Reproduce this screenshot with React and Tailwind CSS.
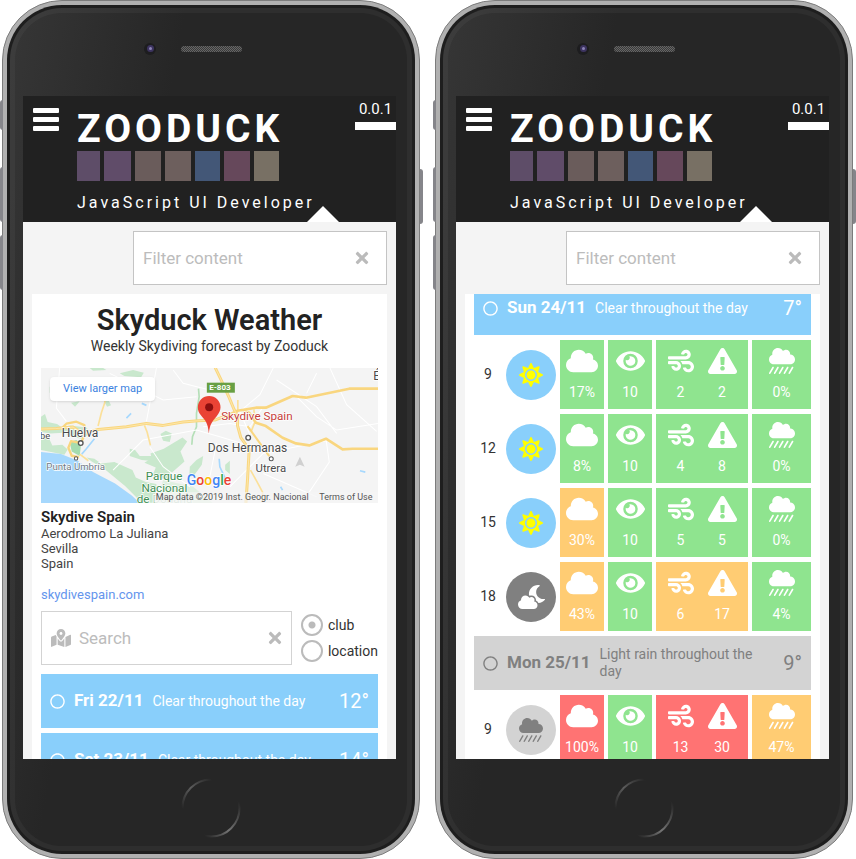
import React from "react";
import {
  FaCloud,
  FaEye,
  FaWind,
  FaExclamationTriangle,
  FaCloudShowersHeavy,
  FaCloudMoon,
  FaSun,
  FaTimes,
  FaMapMarkedAlt,
  FaRegCircle,
} from "react-icons/fa";

const SWATCHES = [
  "w-[23px] bg-[#5e4d68]",
  "w-[27px] bg-[#604c69]",
  "w-[26px] bg-[#6a5c5b]",
  "w-[26px] bg-[#6d5f5d]",
  "w-[25px] bg-[#435777]",
  "w-[26px] bg-[#66485b]",
  "w-[25px] bg-[#787064]",
];

const LEVELS = {
  good: "bg-[#8fe48f]",
  fair: "bg-[#ffcc73]",
  bad: "bg-[#ff7373]",
};

const SUNDAY = [
  { hour: 9, sky: "sun", cloud: [17, "good"], vis: [10, "good"], wind: [2, 2, "good"], rain: [0, "good"] },
  { hour: 12, sky: "sun", cloud: [8, "good"], vis: [10, "good"], wind: [4, 8, "good"], rain: [0, "good"] },
  { hour: 15, sky: "sun", cloud: [30, "fair"], vis: [10, "good"], wind: [5, 5, "good"], rain: [0, "good"] },
  { hour: 18, sky: "night", cloud: [43, "fair"], vis: [10, "good"], wind: [6, 17, "fair"], rain: [4, "good"] },
];

const MONDAY = [
  { hour: 9, sky: "rain", cloud: [100, "bad"], vis: [10, "good"], wind: [13, 30, "bad"], rain: [47, "fair"] },
];

function Phone({ children }) {
  return (
    <div className="relative min-w-0 flex-1">
      <span className="absolute top-[100px] -left-[2px] h-[30px] w-[3px] rounded-l-sm bg-[#85858a]" />
      <span className="absolute top-[167px] -left-[2px] h-[55px] w-[3px] rounded-l-sm bg-[#85858a]" />
      <span className="absolute top-[235px] -left-[2px] h-[55px] w-[3px] rounded-l-sm bg-[#85858a]" />
      <span className="absolute top-[169px] -right-[3px] h-[55px] w-[3px] rounded-r-sm bg-[#85858a]" />
      <div className="rounded-[60px] border border-[#7c7c7c] bg-[#b0b0b0] p-1">
        <div className="rounded-[55px] bg-[#1e1e1e] p-[3px]">
          <div className="rounded-[52px] border-[5px] border-white/4 bg-[#262626] bg-linear-[100deg,#363636_0%,#262626_32%] bg-origin-border pr-[11px] pl-2">
            <div className="flex h-[83px] items-center justify-center gap-[25px] pb-[12px] pl-[4px]">
              <span className="grid size-3 place-items-center rounded-full bg-[#1d1d1f]">
                <span className="grid size-[7px] place-items-center rounded-full bg-[#3d3460]">
                  <span className="size-[3px] rounded-full bg-[#8d84b8]" />
                </span>
              </span>
              <span className="h-[6px] w-[61px] rounded-full bg-[#5c5c5c] bg-[conic-gradient(#3a3a3a_25%,#666_0_50%,#3a3a3a_0_75%,#666_0)] bg-size-[2px_2px]" />
              <span className="w-3" />
            </div>
            <div className="flex h-[663px] flex-col overflow-hidden bg-[#f4f4f4]">{children}</div>
            <div className="flex h-[87px] items-start justify-center pt-[19px] pl-[3px]">
              <button aria-label="Home" className="rounded-full">
                <svg viewBox="0 0 60 60" className="size-[60px]" fill="none" strokeWidth="2">
                  <defs>
                    <linearGradient id="ring-light" x1="0" y1="1" x2="1" y2="0">
                      <stop offset="0.2" stopColor="#262626" />
                      <stop offset="0.5" stopColor="#5c5c5c" />
                      <stop offset="0.8" stopColor="#262626" />
                    </linearGradient>
                    <linearGradient id="ring-bright" x1="0" y1="1" x2="1" y2="0">
                      <stop offset="0.15" stopColor="#262626" />
                      <stop offset="0.45" stopColor="#747474" />
                      <stop offset="0.85" stopColor="#262626" />
                    </linearGradient>
                  </defs>
                  <path d="M9.800 50.200A28.500 28.500 0 0 1 50.200 9.800" stroke="url(#ring-light)" />
                  <path d="M50.200 9.800A28.500 28.500 0 0 1 9.800 50.200" stroke="url(#ring-bright)" />
                </svg>
              </button>
            </div>
          </div>
        </div>
      </div>
    </div>
  );
}

function Header() {
  return (
    <header className="flex h-[126px] shrink-0 bg-[#212121] text-white">
      <button aria-label="Menu" className="ml-[10px] flex w-[26px] flex-col gap-1 self-start pt-3">
        <span className="h-[5px] w-full rounded-[1px] bg-white" />
        <span className="h-[5px] w-full rounded-[1px] bg-white" />
        <span className="h-[5px] w-full rounded-[1px] bg-white" />
      </button>
      <div className="ml-[18px] flex-1 pt-[13px]">
        <h1 className="text-[39px] leading-[40px] font-bold tracking-[4px]">ZOODUCK</h1>
        <div className="mt-[2px] flex h-[30px] gap-1">
          {SWATCHES.map((s) => (
            <span key={s} className={s} />
          ))}
        </div>
        <div className="flex items-end">
          <p className="mt-3 h-[29px] text-[16px] leading-[20px] tracking-[3px] whitespace-nowrap">
            JavaScript UI Developer
          </p>
          <svg viewBox="0 0 32 16" className="-ml-2 h-4 w-8 shrink-0" fill="#fff">
            <path d="M0 16 16 0 32 16z" />
          </svg>
        </div>
      </div>
      <div className="-ml-[41px] w-[41px] pt-1 text-center text-[15px] leading-[18px]">
        0.0.1
        <div className="mt-1 h-2 bg-white" />
      </div>
    </header>
  );
}

function FilterField() {
  return (
    <div className="flex h-[72px] shrink-0 justify-end px-[9px] pt-[9px]">
      <div className="flex h-[54px] w-[254px] items-center border border-[#c4c4c4] bg-white pr-[17px] pl-[9px]">
        <input
          type="text"
          aria-label="Filter content"
          placeholder="Filter content"
          className="min-w-0 flex-1 pt-0.5 text-[17px] outline-none placeholder:text-[#bcbcbc]"
        />
        <button aria-label="Clear filter" className="text-[#bbb]">
          <FaTimes className="h-[18px] w-[14px]" />
        </button>
      </div>
    </div>
  );
}

function AreaMap() {
  return (
    <div className="relative mt-3">
      <svg viewBox="34 24 1010 405" className="block w-full" fill="none" role="img" aria-label="Map">
        <rect x="34" y="24" width="1010" height="405" fill="#f4f4f4" />
        <g fill="#c9e8cd">
          <path d="M34 170l12-8 8 24 28 6 20 14 0 12-40 2-28-4zM34 222l20 4 14 30 30-2 16 14-10 16-40-8-30-6z" />
          <path d="M92 202l30-6 48 6 14 18-30 16-40-10z" />
          <path d="M170 292l24 4 20 14 40-4 54 24 10 22 30 14 32 6-4 56h-40l-50-50-60-50-40-24z" />
          <path d="M300 266l16 4 14 18 40 0 10 16-44-4-36-12z" />
          <path d="M392 222l16-10 18 8-6 26-20-4z" />
          <path d="M362 280l40-14 56-34 14 12-20 30 12 30-34 30-22 24-40-12 10-24-34-14 22-14z" />
          <path d="M480 320l20-20 20-12-4 26-22 30-16 8z" />
          <path d="M586 314l14-12 0 40-14-12zM270 40l40-10 32 8-8 14-50-4zM124 128l26-4-14 16zM222 122l14-2 8 16-12 4z" />
          <path d="M60 80l20 14-6 10-14-6zM180 24l40 0 10 6-40 2z" />
        </g>
        <path d="M400 360l90 20 60 50H380z" fill="#e0f0e1" />
        <path d="M506 86l2 24-8 50 0 40-12 30-2 24" stroke="#b5dfb8" strokeWidth="5" />
        <path d="M34 276l60 6 50 20 46 34 66 34 50 36 24 23H34z" fill="#a6d8fd" />
        <path d="M194 236l-24 30-14 16M336 130l14 6M290 174l14-14M568 296l2 24 14 30-4 20M990 332l16 4M752 380l6 10" stroke="#a6d8fd" strokeWidth="5" />
        <path d="M120 246l20-6 14 12-4 36-24-14z" fill="#a5dcae" />
        <g stroke="#fff" strokeWidth="3">
          <path d="M90 24l-10 120 30 40M380 24l-30 160M430 30l30 40 80 20M730 24l-40 80-60 50 30 70M740 60l120 80 60 80M800 110l60 60 60 40 124-20M860 40l-30 60M250 330l90-90 160-30 70 20 100 30M360 260l40 60 80 60M560 250l-20 100M600 380l100-100 200-40M700 340l160 70M888 236l10 70-60 90M240 40l160 80 100-10M520 200l80-10 60 10 40-60M900 24l50 110 90 80" />
        </g>
        <path
          d="M205 198l10-40 10-30 4-24-12-12M222 104l24-10 40-40M344 196l8 20 10 40M624 120v30l-12 22M672 148l4 36-12 30M662 330l20 36 16 30v30M150 282l26 20"
          stroke="#fbe09a"
          strokeWidth="5"
          strokeLinejoin="round"
        />
        <g stroke="#f9d67f" strokeWidth="9" strokeLinejoin="round">
          <path d="M34 207l46-2 50-4 30 20 45-13 85-8 60-10 50 6 60-10 45-4 50-2 52-20" />
          <path d="M606 160l17-8 55-9h30l80-35 40 5 130-27h86" strokeWidth="8" />
          <path d="M556 23l17 35 25 55 14 34 11 20 0 30 10 36 25 35-5 90-5 70" />
          <path d="M640 152l18 6 20 30 30 10 50 35 40 17 40 6 50-20 50 32 30-2h76" strokeWidth="8" />
          <path d="M653 198l65 90" strokeWidth="6" />
          <path d="M96 205l14-14 30-6 24 10 0 30-10 24-30-6-8 20 10 24 22 4" strokeWidth="7" />
        </g>
        <g stroke="#fde6a8" strokeWidth="3" strokeLinejoin="round">
          <path d="M34 207l46-2 50-4 30 20 45-13 85-8 60-10 50 6 60-10 45-4 50-2 52-20" />
          <path d="M556 23l17 35 25 55 14 34 11 20 0 30 10 36 25 35-5 90-5 70" />
        </g>
        <rect x="531" y="68" width="84" height="30" fill="#689f43" />
        <path d="M810 290l14 30-14-6-14 6z" fill="#d0d0d0" />
        <g stroke="#555" strokeWidth="4" fill="#fff">
          <circle cx="153" cy="249" r="7" />
          <circle cx="655" cy="233" r="7" />
          <circle cx="139" cy="295" r="5" strokeWidth="3" />
          <circle cx="724" cy="296" r="6" strokeWidth="3" />
        </g>
        <path
          d="M537 220c-3-32-10-38-22-52-8-9-11-16-11-26a34 34 0 0 1 68 0c0 10-4 17-12 27-12 14-20 22-23 51z"
          fill="#ea4335"
        />
        <circle cx="538" cy="142" r="12" fill="#8c0f0f" />
        <g fill="#4a4a4a" stroke="#fff" strokeWidth="4" paintOrder="stroke">
          <text x="96" y="231" fontSize="36">Huelva</text>
          <text x="31" y="238" fontSize="28">be</text>
          <text x="50" y="329" fontSize="29" fill="#6e7a86">Punta Umbría</text>
          <text x="534" y="275" fontSize="36">Dos Hermanas</text>
          <text x="677" y="336" fontSize="34">Utrera</text>
          <text x="1030" y="61" fontSize="36">É</text>
          <text x="574" y="180" fontSize="35" fill="#c5403a">Skydive Spain</text>
          <g fill="#3e8e53" fontSize="35">
            <text x="348" y="361">Parque</text>
            <text x="335" y="395">Nacional</text>
            <text x="321" y="430">de <tspan fillOpacity=".4">Doñana</tspan></text>
          </g>
        </g>
        <text x="538" y="91" fontSize="24" fontWeight="700" fill="#fff">E-803</text>
        <text x="471" y="374" fontSize="42" fontWeight="500" stroke="#fff" strokeWidth="4" paintOrder="stroke">
          <tspan fill="#4285f4">G</tspan>
          <tspan fill="#ea4335">o</tspan>
          <tspan fill="#fbbc05">o</tspan>
          <tspan fill="#4285f4">g</tspan>
          <tspan fill="#34a853">l</tspan>
          <tspan fill="#ea4335">e</tspan>
        </text>
        <rect x="376" y="396" width="668" height="33" fill="#f5f5f5" fillOpacity=".7" />
        <g fill="#555" fontSize="27">
          <text x="378" y="419">Map data ©2019 Inst. Geogr. Nacional</text>
          <text x="868" y="419">Terms of Use</text>
        </g>
      </svg>
      <a
        href="#map"
        className="absolute top-[9px] left-[9px] rounded-sm bg-white px-[13px] text-[11px] leading-[24px] text-[#3b82e0] shadow"
      >
        View larger map
      </a>
    </div>
  );
}

function Radio({ id, label, checked }) {
  return (
    <div className="flex items-center gap-[5px]">
      <input
        id={id}
        type="radio"
        name="search-by"
        defaultChecked={checked}
        className="size-[22px] shrink-0 appearance-none rounded-full border-2 border-[#bbb] bg-white checked:bg-[radial-gradient(circle,#bbb_3px,transparent_4px)]"
      />
      <label htmlFor={id} className="text-[14px] leading-[20px]">
        {label}
      </label>
    </div>
  );
}

function DayBar({ day, summary, temp, tone = "bg-[#89cffb] text-white" }) {
  return (
    <button className={`flex h-[54px] w-full shrink-0 items-center gap-[9px] px-[9px] text-left ${tone}`}>
      <FaRegCircle className="size-[15px] shrink-0" />
      <span className="text-[17px] font-bold whitespace-nowrap">{day}</span>
      <span className="flex-1 text-[14px] leading-[17px]">{summary}</span>
      <span className="text-[20px]">{temp}°</span>
    </button>
  );
}

const SKIES = {
  sun: { tone: "bg-[#89cffb] text-[#ffff00]", icon: <FaSun className="size-[24px]" /> },
  night: { tone: "bg-[#808080] text-white", icon: <FaCloudMoon className="h-[24px] w-[27px]" /> },
  rain: { tone: "bg-[#d3d3d3] text-[#808080]", icon: <FaCloudShowersHeavy className="size-[24px]" /> },
};

function Reading({ icon, children }) {
  return (
    <div className="flex flex-col items-center gap-2">
      {icon}
      <span>{children}</span>
    </div>
  );
}

function Hours({ hours }) {
  const cell = "pt-2 text-[14px] leading-[20px] text-white";
  return (
    <table className="block shrink-0">
      <tbody className="flex flex-col gap-[5px]">
        {hours.map((h) => (
          <tr key={h.hour} className="grid h-[69px] grid-cols-[28px_50px_44px_44px_92px_1fr] gap-1">
            <th scope="row" className="self-center text-center text-[14px] font-normal">
              {h.hour}
            </th>
            <td className="self-center">
              <span className={`grid size-[50px] place-items-center rounded-full ${SKIES[h.sky].tone}`}>
                {SKIES[h.sky].icon}
              </span>
            </td>
            <td className={`${cell} ${LEVELS[h.cloud[1]]}`}>
              <Reading icon={<FaCloud className="h-[26px] w-[32px]" />}>{h.cloud[0]}%</Reading>
            </td>
            <td className={`${cell} ${LEVELS[h.vis[1]]}`}>
              <Reading icon={<FaEye className="h-[26px] w-[29px]" />}>{h.vis[0]}</Reading>
            </td>
            <td className={`${cell} flex justify-center gap-[14px] ${LEVELS[h.wind[2]]}`}>
              <Reading icon={<FaWind className="size-[26px]" />}>{h.wind[0]}</Reading>
              <Reading icon={<FaExclamationTriangle className="h-[26px] w-[29px]" />}>{h.wind[1]}</Reading>
            </td>
            <td className={`${cell} ${LEVELS[h.rain[1]]}`}>
              <Reading icon={<FaCloudShowersHeavy className="size-[26px]" />}>{h.rain[0]}%</Reading>
            </td>
          </tr>
        ))}
      </tbody>
    </table>
  );
}

function OverviewScreen() {
  return (
    <Phone>
      <Header />
      <FilterField />
      <main className="mx-[9px] min-h-0 flex-1 overflow-hidden bg-white px-[9px]">
        <h2 className="pt-[10px] text-center text-[29px] leading-[32px] font-semibold text-[#222]">
          Skyduck Weather
        </h2>
        <p className="text-center text-[14px] leading-[20px]">Weekly Skydiving forecast by Zooduck</p>
        <AreaMap />
        <address className="pt-[6px] text-[13px] leading-[15px] text-[#444] not-italic">
          <strong className="block text-[15px] leading-[17px] font-semibold text-[#222]">Skydive Spain</strong>
          Aerodromo La Juliana
          <br />
          Sevilla
          <br />
          Spain
          <a href="#skydivespain" className="mt-4 block text-[#6495ed]">
            skydivespain.com
          </a>
        </address>
        <div className="mt-[9px] mb-[9px] flex items-center gap-[9px]">
          <div className="flex h-[54px] min-w-0 flex-1 items-center border border-[#d3d3d3] pr-[9px] pl-[9px]">
            <FaMapMarkedAlt className="mr-2 h-[18px] w-[20px] text-[#bbb]" />
            <input
              type="text"
              aria-label="Search"
              placeholder="Search"
              className="min-w-0 flex-1 pt-0.5 text-[17px] outline-none placeholder:text-[#bcbcbc]"
            />
            <button aria-label="Clear search" className="text-[#bbb]">
              <FaTimes className="h-[18px] w-[14px]" />
            </button>
          </div>
          <div className="flex flex-col gap-1">
            <Radio id="by-club" label="club" checked />
            <Radio id="by-location" label="location" />
          </div>
        </div>
        <div className="flex flex-col gap-[5px]">
          <DayBar day="Fri 22/11" summary="Clear throughout the day" temp={12} />
          <DayBar day="Sat 23/11" summary="Clear throughout the day" temp={14} />
        </div>
      </main>
    </Phone>
  );
}

function ForecastScreen() {
  return (
    <Phone>
      <Header />
      <FilterField />
      <main className="mx-[9px] min-h-0 flex-1 overflow-hidden bg-white px-[9px]">
        <div className="-mt-[13px] flex flex-col gap-[5px]">
          <DayBar day="Sun 24/11" summary="Clear throughout the day" temp={7} />
          <Hours hours={SUNDAY} />
          <DayBar
            day="Mon 25/11"
            summary="Light rain throughout the day"
            temp={9}
            tone="bg-[#d3d3d3] text-[#808080]"
          />
          <Hours hours={MONDAY} />
        </div>
      </main>
    </Phone>
  );
}

export default function App() {
  return (
    <div className="flex gap-[15px] bg-white pr-[3px] pl-[2px] font-['Roboto',sans-serif] text-[#333]">
      <OverviewScreen />
      <ForecastScreen />
    </div>
  );
}
